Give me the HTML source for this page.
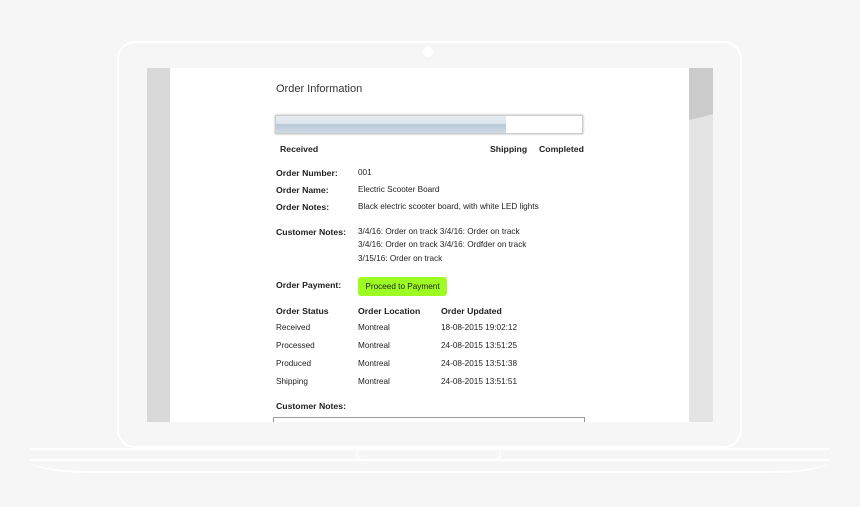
<!DOCTYPE html>
<html><head><style>
body{margin:0;width:860px;height:507px;background:#f6f6f6;position:relative;overflow:hidden;font-family:"Liberation Sans",Arial,sans-serif;color:#222}
.a{position:absolute}
.t{position:absolute;font-size:8.2px;white-space:nowrap}
.b{font-weight:bold;font-size:8.7px}
</style></head><body>
<div class="a" style="left:117px;top:41px;width:625px;height:407px;border:2px solid #fff;border-radius:18px;box-sizing:border-box"></div>
<div class="a" style="left:423px;top:47px;width:10px;height:10px;border-radius:50%;background:#fff"></div>
<div class="a" style="left:30px;top:448px;width:800px;height:2px;background:#fff"></div>
<div class="a" style="left:30px;top:459px;width:800px;height:2px;background:#fff"></div>
<div class="a" style="left:356px;top:448px;width:145px;height:12px;border:1.5px solid #fff;border-radius:6px;box-sizing:border-box"></div>
<div class="a" style="left:30px;top:461px;width:800px;height:12px;border-bottom:2px solid #fff;border-radius:0 0 60px 60px/0 0 12px 12px;box-sizing:border-box"></div>
<div class="a" style="left:147px;top:68px;width:566px;height:354px;background:#fff;overflow:hidden">
 <div class="a" style="left:0;top:0;width:23px;height:354px;background:#d9d9d9"></div>
 <div class="a" style="left:542px;top:0;width:24px;height:354px;background:#e4e4e4"></div>
 <svg class="a" style="left:542px;top:0" width="24" height="60"><polygon points="0,0 24,0 24,46 0,52" fill="#cbcbcb"/></svg>
</div>
<div class="t" style="left:276px;top:83px;font-size:11px;color:#333">Order Information</div>
<div class="a" style="left:275px;top:115px;width:308px;height:19px;border:1px solid #ccc;background:#fff;box-shadow:0 0 2px #aaa;box-sizing:border-box">
 <div style="width:230px;height:17px;background:linear-gradient(#e8edf2 0,#dbe3ea 45%,#b7c8d6 50%,#cfdbe5 100%)"></div></div>
<div class="t b" style="left:280px;top:144px">Received</div>
<div class="t b" style="left:490px;top:144px">Shipping</div>
<div class="t b" style="left:539px;top:144px">Completed</div>
<div class="t b" style="left:276px;top:168px">Order Number:</div><div class="t" style="left:358px;top:168px">001</div>
<div class="t b" style="left:276px;top:185px">Order Name:</div><div class="t" style="left:358px;top:185px">Electric Scooter Board</div>
<div class="t b" style="left:276px;top:202px">Order Notes:</div><div class="t" style="left:358px;top:202px">Black electric scooter board, with white LED lights</div>
<div class="t b" style="left:276px;top:227px">Customer Notes:</div>
<div class="t" style="left:358px;top:227px">3/4/16: Order on track 3/4/16: Order on track</div>
<div class="t" style="left:358px;top:240px">3/4/16: Order on track 3/4/16: Ordfder on track</div>
<div class="t" style="left:358px;top:254px">3/15/16: Order on track</div>
<div class="t b" style="left:276px;top:280px">Order Payment:</div>
<div class="a" style="left:358px;top:277px;width:89px;height:19px;background:#9dfc22;border-radius:3px;font-size:8.2px;line-height:19px;text-align:center">Proceed to Payment</div>
<div class="t b" style="left:276px;top:306px">Order Status</div><div class="t b" style="left:358px;top:306px">Order Location</div><div class="t b" style="left:441px;top:306px">Order Updated</div>
<div class="t" style="left:276px;top:323px">Received</div><div class="t" style="left:358px;top:323px">Montreal</div><div class="t" style="left:441px;top:323px">18-08-2015 19:02:12</div>
<div class="t" style="left:276px;top:341px">Processed</div><div class="t" style="left:358px;top:341px">Montreal</div><div class="t" style="left:441px;top:341px">24-08-2015 13:51:25</div>
<div class="t" style="left:276px;top:359px">Produced</div><div class="t" style="left:358px;top:359px">Montreal</div><div class="t" style="left:441px;top:359px">24-08-2015 13:51:38</div>
<div class="t" style="left:276px;top:377px">Shipping</div><div class="t" style="left:358px;top:377px">Montreal</div><div class="t" style="left:441px;top:377px">24-08-2015 13:51:51</div>
<div class="t b" style="left:276px;top:401px">Customer Notes:</div>
<div class="a" style="left:273px;top:417px;width:312px;height:5px;border:1px solid #999;border-bottom:none;box-sizing:border-box"></div>
</body></html>
